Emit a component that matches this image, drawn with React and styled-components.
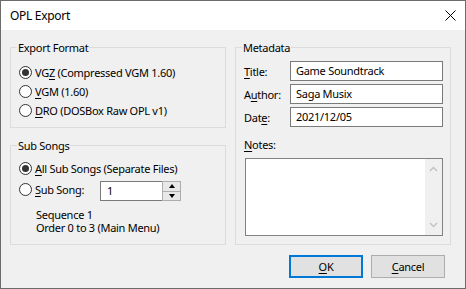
import React from "react";
import styled, { createGlobalStyle } from "styled-components";

const GlobalStyle = createGlobalStyle`
  html, body {
    margin: 0;
    padding: 0;
    background: #ffffff;
  }
  body {
    font-family: "Noto Sans", "Open Sans", sans-serif;
  }
`;

const Window = styled.div`
  width: 466px;
  height: 289px;
  box-sizing: border-box;
  border: 1px solid #6b6b6b;
  display: flex;
  flex-direction: column;
  font-size: 11px;
  letter-spacing: -0.28px;
  color: #000;
`;

const TitleBar = styled.div`
  height: 29px;
  flex: none;
  background: #ffffff;
  display: flex;
  align-items: center;
  justify-content: space-between;
  padding: 0 9px 0 9px;
  font-size: 12px;
  letter-spacing: -0.3px;
`;

const CloseButton = styled.svg`
  width: 11px;
  height: 11px;
  display: block;
`;

const Body = styled.div`
  flex: 1;
  background: #f0f0f0;
  padding: 10px 14px 10px 9px;
  display: flex;
  flex-direction: column;
  gap: 10px;
`;

const Columns = styled.div`
  display: flex;
  gap: 9px;
  height: 205px;
`;

const Column = styled.div`
  width: 216px;
  display: flex;
  flex-direction: column;
  gap: 10px;
`;

const Group = styled.fieldset`
  margin: 0;
  padding: 0 7px ${(p) => p.$pb || 0}px 8px;
  border: 1px solid #dcdcdc;
  box-sizing: border-box;
  min-width: 0;
  flex: ${(p) => (p.$grow ? 1 : "none")};
  height: ${(p) => (p.$h ? `${p.$h}px` : "auto")};
`;

const Legend = styled.legend`
  padding: 0 1px;
  margin-left: -2px;
  line-height: 15px;
`;

const Stack = styled.div`
  display: flex;
  flex-direction: column;
  padding-top: ${(p) => p.$top || 0}px;
  gap: ${(p) => p.$gap || 0}px;
`;

const Row = styled.div`
  display: flex;
  align-items: center;
  height: ${(p) => p.$h || 19}px;
`;

const Radio = styled.span`
  width: 13px;
  height: 13px;
  box-sizing: border-box;
  border: 1px solid #333333;
  border-radius: 50%;
  background: #ffffff;
  display: flex;
  align-items: center;
  justify-content: center;
  flex: none;
  &::after {
    content: "";
    width: 7px;
    height: 7px;
    border-radius: 50%;
    background: ${(p) => (p.$checked ? "#333333" : "transparent")};
  }
`;

const RadioLabel = styled.span`
  margin-left: 3px;
  white-space: nowrap;
  width: ${(p) => (p.$w ? `${p.$w}px` : "auto")};
`;

const Info = styled.div`
  padding: 7px 0 0 17px;
  line-height: 13px;
`;

const SpinEdit = styled.div`
  width: 81px;
  height: 20px;
  box-sizing: border-box;
  border: 1px solid #7a7a7a;
  background: #ffffff;
  display: flex;
  align-self: flex-end;
`;

const SpinText = styled.span`
  flex: 1;
  padding-left: 6px;
  line-height: 18px;
`;

const SpinButtons = styled.div`
  width: 17px;
  display: flex;
  flex-direction: column;
  border: 1px solid #adadad;
  margin: -1px -1px -1px 0;
`;

const SpinButton = styled.div`
  flex: 1;
  background: #e8e8e8;
  display: flex;
  align-items: center;
  justify-content: center;
  & + & {
    border-top: 1px solid #adadad;
  }
  &::after {
    content: "";
    border-left: 3px solid transparent;
    border-right: 3px solid transparent;
    ${(p) =>
      p.$up
        ? "border-bottom: 4px solid #000;"
        : "border-top: 4px solid #000;"}
  }
`;

const FieldRow = styled.div`
  display: flex;
  align-items: center;
  height: 20px;
`;

const FieldLabel = styled.span`
  width: 46px;
  flex: none;
`;

const Edit = styled.div`
  flex: 1;
  height: 20px;
  box-sizing: border-box;
  border: 1px solid #7a7a7a;
  background: #ffffff;
  padding-left: 5px;
  line-height: 18px;
`;

const NotesLabel = styled.div`
  margin-top: 10px;
  line-height: 15px;
`;

const NotesBox = styled.div`
  margin: 6px 0 0 1px;
  height: 78px;
  box-sizing: border-box;
  border: 1px solid #828282;
  background: #ffffff;
  display: flex;
  justify-content: flex-end;
`;

const ScrollBar = styled.div`
  width: 17px;
  background: #f0f0f0;
  display: flex;
  flex-direction: column;
  justify-content: space-between;
  align-items: center;
  padding: 7px 0;
`;

const Chevron = styled.svg`
  width: 9px;
  height: 6px;
  display: block;
`;

const Buttons = styled.div`
  display: flex;
  justify-content: flex-end;
  gap: 8px;
  margin-right: 6px;
`;

const Button = styled.div`
  width: 74px;
  height: 23px;
  box-sizing: border-box;
  background: #e1e1e1;
  border: ${(p) => (p.$default ? "2px solid #0078d7" : "1px solid #adadad")};
  display: flex;
  align-items: center;
  justify-content: center;
`;

const Key = styled.u`
  text-underline-offset: 2px;
`;

const Up = () => (
  <Chevron viewBox="0 0 9 6">
    <path d="M1 5 L4.5 1.5 L8 5" fill="none" stroke="#c1c1c1" strokeWidth="1.4" />
  </Chevron>
);

const Down = () => (
  <Chevron viewBox="0 0 9 6">
    <path d="M1 1 L4.5 4.5 L8 1" fill="none" stroke="#c1c1c1" strokeWidth="1.4" />
  </Chevron>
);

export default function App() {
  return (
    <>
      <GlobalStyle />
      <Window>
        <TitleBar>
          <span>OPL Export</span>
          <CloseButton viewBox="0 0 11 11">
            <path d="M0.5 0.5 L10.5 10.5 M10.5 0.5 L0.5 10.5" stroke="#000" strokeWidth="1" />
          </CloseButton>
        </TitleBar>
        <Body>
          <Columns>
            <Column>
              <Group $h={88}>
                <Legend>Export Format</Legend>
                <Stack $top={8}>
                  <Row>
                    <Radio $checked />
                    <RadioLabel>
                      VG<Key>Z</Key> (Compressed VGM 1.60)
                    </RadioLabel>
                  </Row>
                  <Row>
                    <Radio />
                    <RadioLabel>
                      <Key>V</Key>GM (1.60)
                    </RadioLabel>
                  </Row>
                  <Row>
                    <Radio />
                    <RadioLabel>
                      <Key>D</Key>RO (DOSBox Raw OPL v1)
                    </RadioLabel>
                  </Row>
                </Stack>
              </Group>
              <Group $grow>
                <Legend>Sub Songs</Legend>
                <Stack $top={6}>
                  <Row>
                    <Radio $checked />
                    <RadioLabel>
                      <Key>A</Key>ll Sub Songs (Separate Files)
                    </RadioLabel>
                  </Row>
                  <Row $h={23}>
                    <Radio />
                    <RadioLabel $w={65}>
                      <Key>S</Key>ub Song:
                    </RadioLabel>
                    <SpinEdit>
                      <SpinText>1</SpinText>
                      <SpinButtons>
                        <SpinButton $up />
                        <SpinButton />
                      </SpinButtons>
                    </SpinEdit>
                  </Row>
                </Stack>
                <Info>
                  Sequence 1
                  <br />
                  Order 0 to 3 (Main Menu)
                </Info>
              </Group>
            </Column>
            <Column>
              <Group $grow $pb={8}>
                <Legend>Metadata</Legend>
                <Stack $top={6} $gap={3}>
                  <FieldRow>
                    <FieldLabel>
                      <Key>T</Key>itle:
                    </FieldLabel>
                    <Edit>Game Soundtrack</Edit>
                  </FieldRow>
                  <FieldRow>
                    <FieldLabel>
                      A<Key>u</Key>thor:
                    </FieldLabel>
                    <Edit>Saga Musix</Edit>
                  </FieldRow>
                  <FieldRow>
                    <FieldLabel>
                      Dat<Key>e</Key>:
                    </FieldLabel>
                    <Edit>2021/12/05</Edit>
                  </FieldRow>
                </Stack>
                <NotesLabel>
                  <Key>N</Key>otes:
                </NotesLabel>
                <NotesBox>
                  <ScrollBar>
                    <Up />
                    <Down />
                  </ScrollBar>
                </NotesBox>
              </Group>
            </Column>
          </Columns>
          <Buttons>
            <Button $default>
              <span>
                <Key>O</Key>K
              </span>
            </Button>
            <Button>
              <span>
                <Key>C</Key>ancel
              </span>
            </Button>
          </Buttons>
        </Body>
      </Window>
    </>
  );
}
